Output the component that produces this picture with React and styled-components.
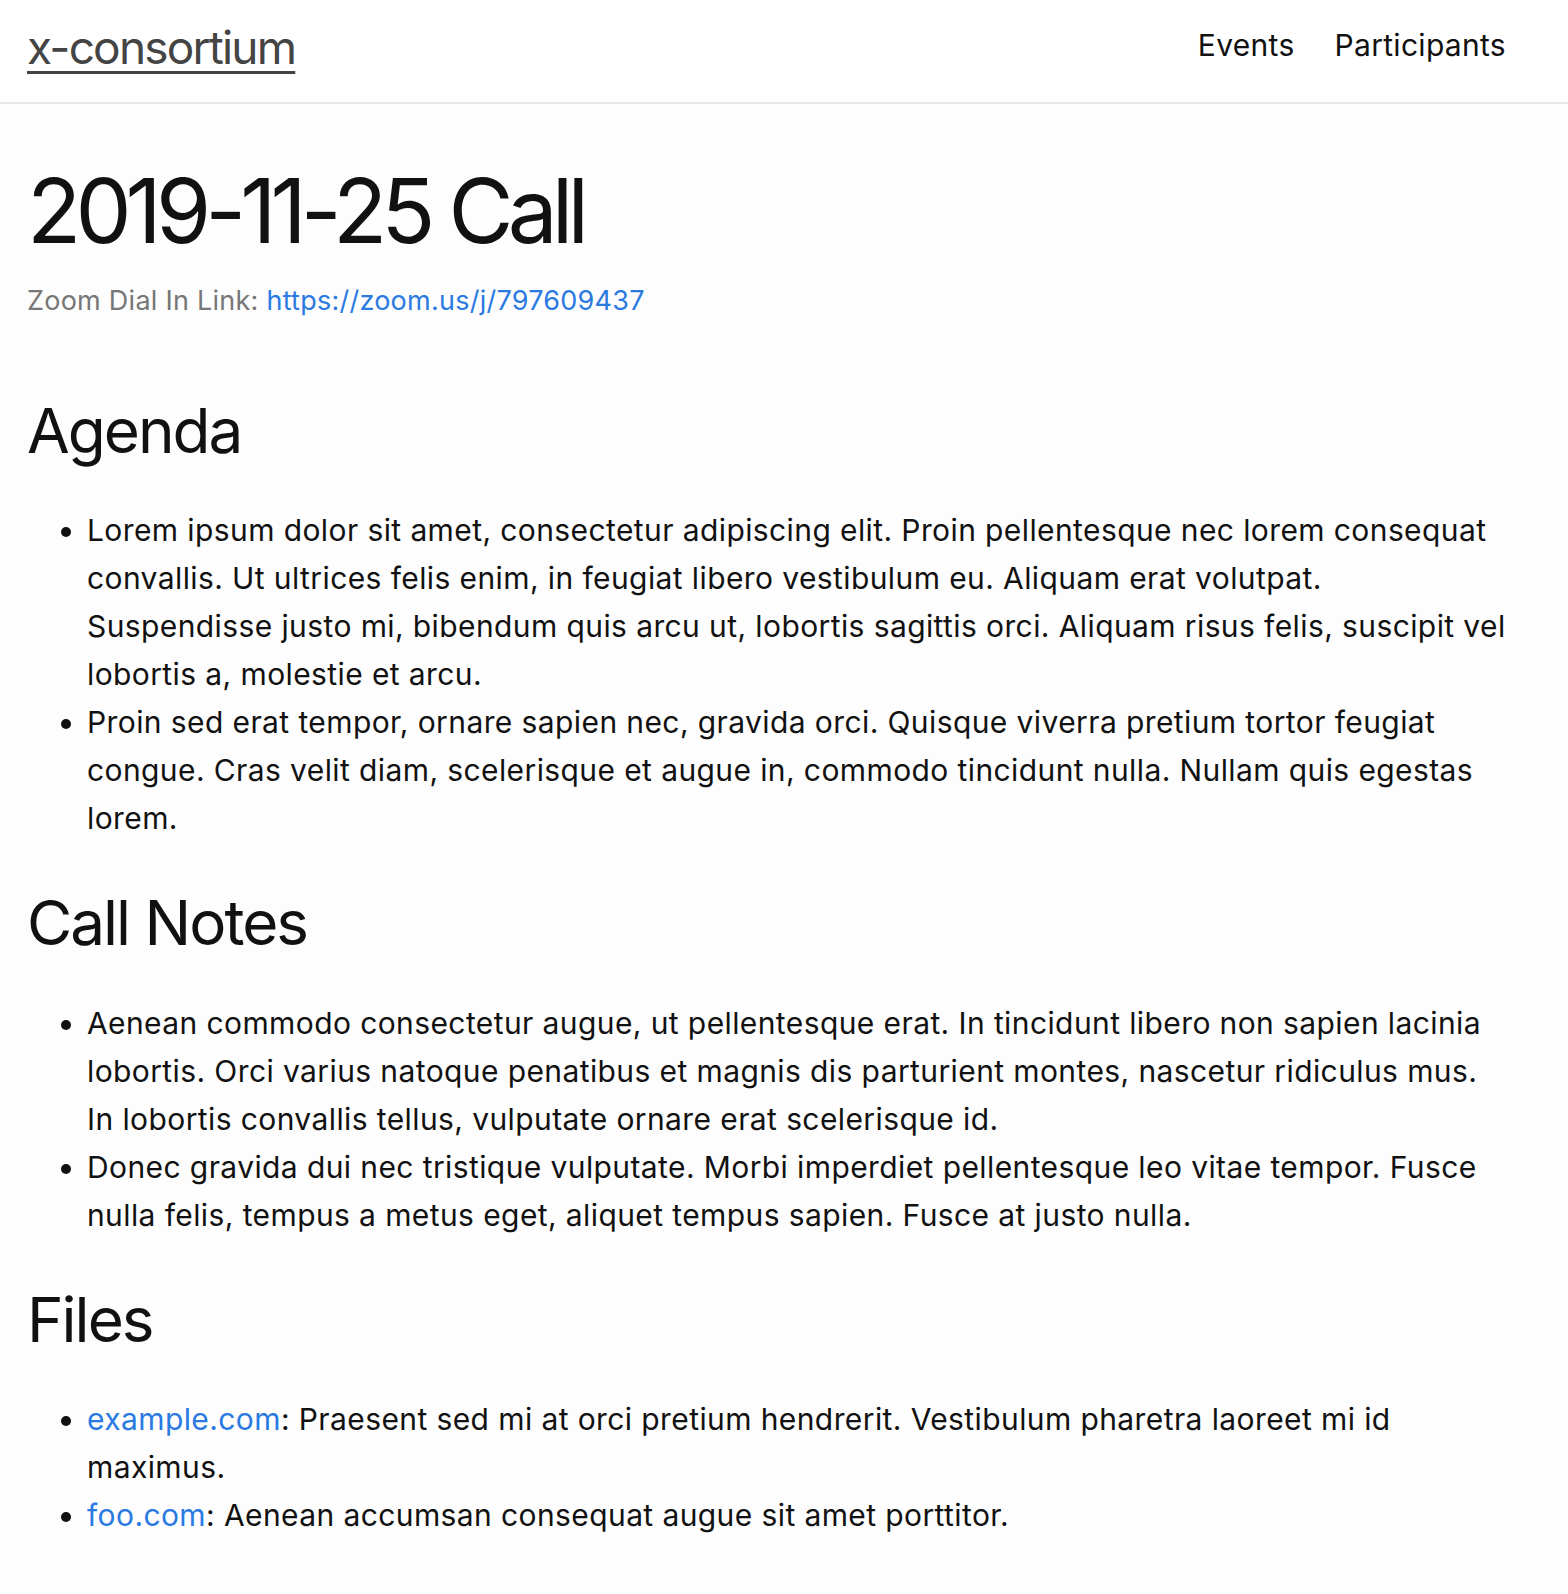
import React from 'react';
import styled, { createGlobalStyle } from 'styled-components';

const GlobalStyle = createGlobalStyle`
    html, body {
        margin: 0;
        padding: 0;
        background: #fdfdfd;
    }

    body {
        font-family: Inter, 'Noto Sans', 'Liberation Sans', sans-serif;
        color: #111;
    }
`;

const Header = styled.header`
    display: flex;
    align-items: center;
    justify-content: space-between;
    height: 102px;
    padding: 0 62px 0 27px;
    background: #fff;
    border-bottom: 2px solid #e8e8e8;
`;

const Logo = styled.a`
    font-size: 46px;
    letter-spacing: -1.8px;
    color: #444;
    text-decoration: underline;
    text-decoration-thickness: 3px;
    text-underline-offset: 7px;
    margin-top: -9px;
`;

const Nav = styled.nav`
    display: flex;
    gap: 40px;
    margin-top: -12px;

    a {
        font-size: 30px;
        letter-spacing: 0.3px;
        color: #111;
        text-decoration: none;
    }
`;

const Main = styled.main`
    padding: 58px 60px 60px 27px;
`;

const Title = styled.h1`
    font-size: 89px;
    font-weight: 400;
    letter-spacing: -5.9px;
    line-height: 1.1;
    margin: 0;
`;

const DialIn = styled.p`
    font-size: 27px;
    letter-spacing: 0.25px;
    color: #777;
    margin: 24px 0 0;

    a {
        color: #2a7ae2;
        text-decoration: none;
    }
`;

const SectionTitle = styled.h2`
    font-size: 62px;
    font-weight: 400;
    letter-spacing: -2px;
    line-height: 1.2;
    margin: ${p => (p.first ? '77px' : '44px')} 0 38px;
`;

const List = styled.ul`
    margin: 0;
    padding-left: 60px;

    li {
        font-size: 30px;
        letter-spacing: 0.4px;
        line-height: 48px;
    }

    a {
        color: #2a7ae2;
        text-decoration: none;
    }
`;

const agenda = [
    'Lorem ipsum dolor sit amet, consectetur adipiscing elit. Proin pellentesque nec lorem consequat convallis. Ut ultrices felis enim, in feugiat libero vestibulum eu. Aliquam erat volutpat. Suspendisse justo mi, bibendum quis arcu ut, lobortis sagittis orci. Aliquam risus felis, suscipit vel lobortis a, molestie et arcu.',
    'Proin sed erat tempor, ornare sapien nec, gravida orci. Quisque viverra pretium tortor feugiat congue. Cras velit diam, scelerisque et augue in, commodo tincidunt nulla. Nullam quis egestas lorem.'
];

const notes = [
    'Aenean commodo consectetur augue, ut pellentesque erat. In tincidunt libero non sapien lacinia lobortis. Orci varius natoque penatibus et magnis dis parturient montes, nascetur ridiculus mus. In lobortis convallis tellus, vulputate ornare erat scelerisque id.',
    'Donec gravida dui nec tristique vulputate. Morbi imperdiet pellentesque leo vitae tempor. Fusce nulla felis, tempus a metus eget, aliquet tempus sapien. Fusce at justo nulla.'
];

const files = [
    { name: 'example.com', text: 'Praesent sed mi at orci pretium hendrerit. Vestibulum pharetra laoreet mi id maximus.' },
    { name: 'foo.com', text: 'Aenean accumsan consequat augue sit amet porttitor.' }
];

export default function App() {
    return (
        <>
            <GlobalStyle />
            <Header>
                <Logo href="#">x-consortium</Logo>
                <Nav>
                    <a href="#">Events</a>
                    <a href="#">Participants</a>
                </Nav>
            </Header>
            <Main>
                <Title>2019-11-25 Call</Title>
                <DialIn>
                    Zoom Dial In Link: <a href="#">https://zoom.us/j/797609437</a>
                </DialIn>

                <SectionTitle first>Agenda</SectionTitle>
                <List>
                    {agenda.map(item => (
                        <li key={item}>{item}</li>
                    ))}
                </List>

                <SectionTitle>Call Notes</SectionTitle>
                <List>
                    {notes.map(item => (
                        <li key={item}>{item}</li>
                    ))}
                </List>

                <SectionTitle>Files</SectionTitle>
                <List>
                    {files.map(file => (
                        <li key={file.name}>
                            <a href="#">{file.name}</a>: {file.text}
                        </li>
                    ))}
                </List>
            </Main>
        </>
    );
}
